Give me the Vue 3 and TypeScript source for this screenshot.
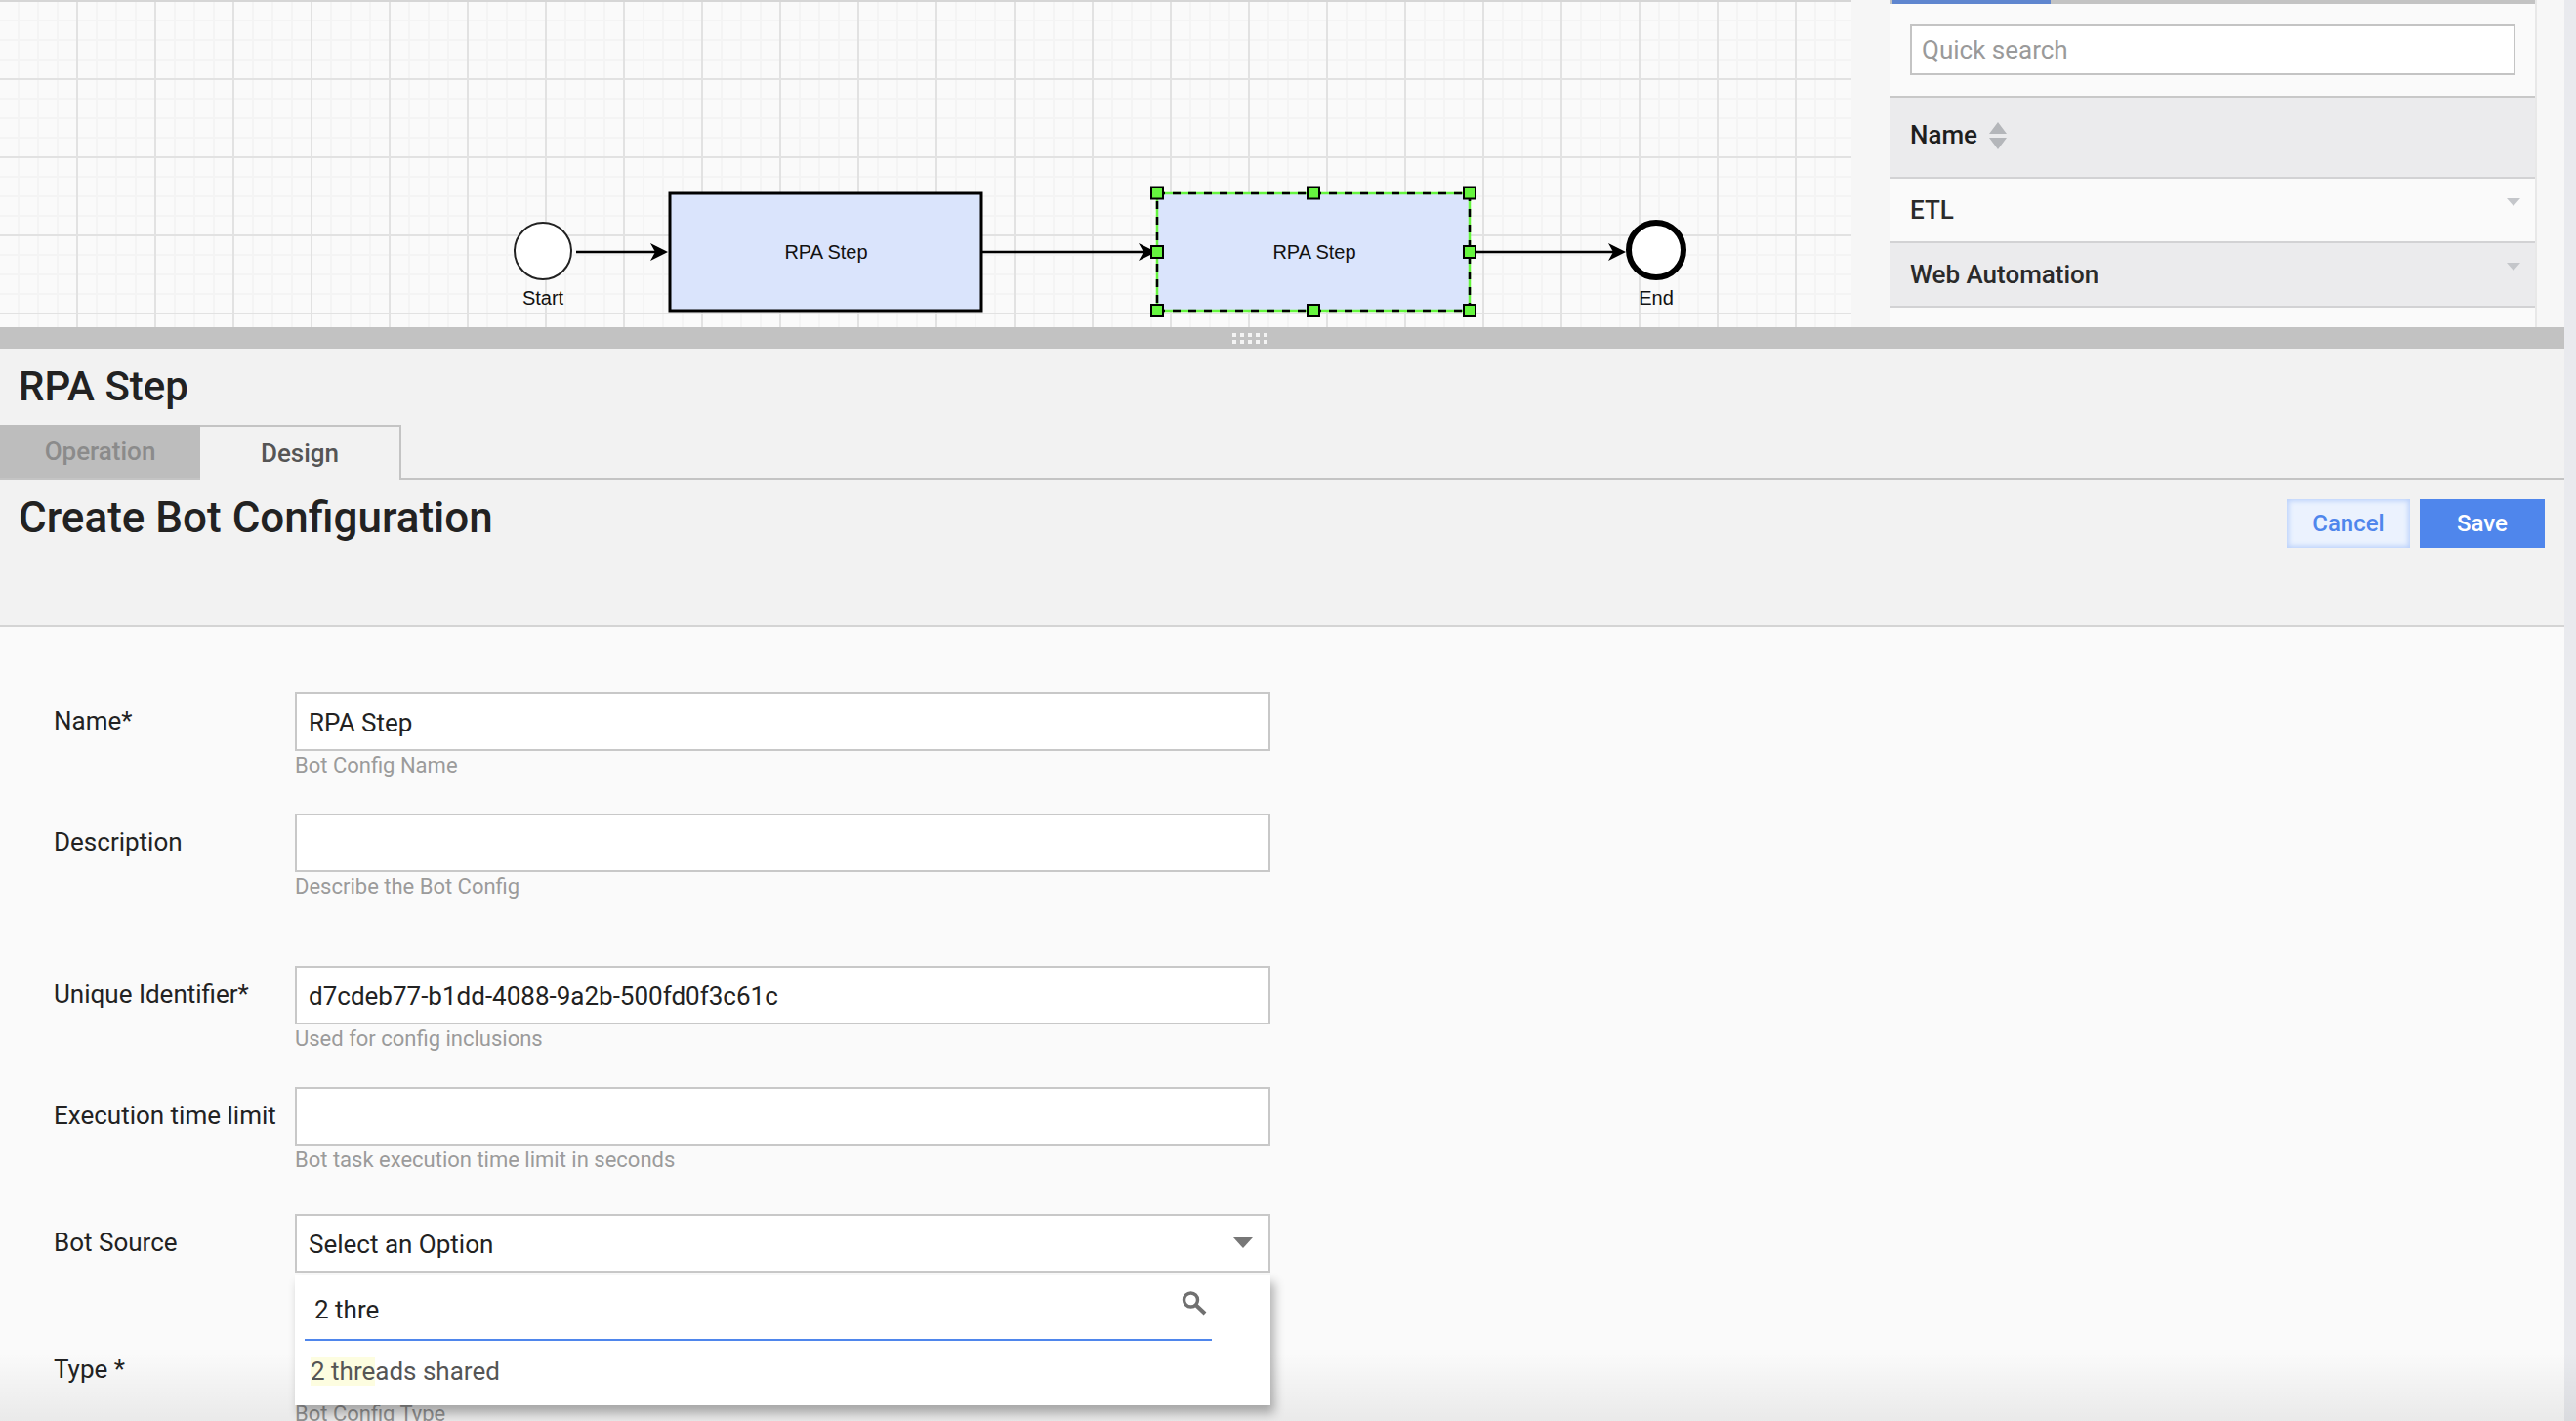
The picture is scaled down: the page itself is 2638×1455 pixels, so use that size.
<script setup lang="ts">
// Bot step editor: flow diagram on top, config form below.
interface Field {
  label: string
  value?: string
  hint: string
  extra?: boolean
  select?: boolean
}

const fields: Field[] = [
  { label: 'Name*', value: 'RPA Step', hint: 'Bot Config Name' },
  { label: 'Description', hint: 'Describe the Bot Config', extra: true },
  { label: 'Unique Identifier*', value: 'd7cdeb77-b1dd-4088-9a2b-500fd0f3c61c', hint: 'Used for config inclusions' },
  { label: 'Execution time limit', hint: 'Bot task execution time limit in seconds' },
  { label: 'Bot Source', value: 'Select an Option', hint: '', select: true },
  { label: 'Type *', value: 'Select an Option', hint: 'Bot Config Type', select: true },
]

const categories = ['ETL', 'Web Automation', '']

const handles = [
  [1185, 197.5],
  [1345, 197.5],
  [1505, 197.5],
  [1185, 258],
  [1505, 258],
  [1185, 318],
  [1345, 318],
  [1505, 318],
]

const arrows = [
  { x1: 590, x2: 684 },
  { x1: 1005, x2: 1184 },
  { x1: 1511, x2: 1665 },
]
</script>

<template>
  <div class="page">
    <div class="main">
      <section class="top">
        <div class="canvas">
          <svg class="diagram" width="1896" height="335" viewBox="0 0 1896 335">
            <g v-for="(a, i) in arrows" :key="`a${i}`">
              <line :x1="a.x1" y1="258" :x2="a.x2 - 10" y2="258" stroke="#000" stroke-width="2.5" />
              <path :d="`M${a.x2} 258 L${a.x2 - 18} 249 L${a.x2 - 13} 258 L${a.x2 - 18} 267 Z`" fill="#000" />
            </g>
            <circle cx="556" cy="257" r="29" fill="#fff" stroke="#222" stroke-width="2" />
            <text x="556" y="312" class="shape-label">Start</text>
            <rect x="686" y="198" width="319" height="120" fill="#dae4fc" stroke="#000" stroke-width="3" />
            <text x="846" y="265" class="shape-label">RPA Step</text>
            <rect x="1185" y="198" width="320" height="120" fill="#dae4fc" />
            <rect x="1185" y="198" width="320" height="120" fill="none" stroke="#66f53f" stroke-width="2.5" />
            <rect x="1185" y="198" width="320" height="120" fill="none" stroke="#000" stroke-width="2.5" stroke-dasharray="8 8" />
            <text x="1346" y="265" class="shape-label">RPA Step</text>
            <circle cx="1696" cy="256" r="28" fill="#fff" stroke="#000" stroke-width="6" />
            <text x="1696" y="312" class="shape-label">End</text>
            <rect
              v-for="(h, i) in handles"
              :key="`h${i}`"
              :x="h[0] - 6"
              :y="h[1] - 6"
              width="12"
              height="12"
              fill="#66f53f"
              stroke="#000"
              stroke-width="2"
            />
          </svg>
        </div>
        <div class="gutter"></div>
        <aside class="side">
          <div class="side-tabs"><span class="side-tab-on"></span></div>
          <div class="search-wrap">
            <div class="search">Quick search</div>
          </div>
          <div class="side-head">
            <span>Name</span>
            <svg class="sort" width="18" height="28" viewBox="0 0 18 28">
              <path d="M9 0 L18 12 H0 Z M0 16 H18 L9 28 Z" fill="#b4b6ba" />
            </svg>
          </div>
          <div v-for="(c, i) in categories" :key="i" class="side-row" :class="{ alt: i === 1 }">
            <span>{{ c }}</span>
            <i class="chev"></i>
          </div>
        </aside>
        <div class="side-rest"></div>
      </section>

      <div class="splitter">
        <div class="grip">
          <i v-for="n in 10" :key="n"></i>
        </div>
      </div>

      <section class="detail">
        <h1 class="title">RPA Step</h1>
        <div class="tabs">
          <div class="tab off">Operation</div>
          <div class="tab on">Design</div>
          <div class="tab-fill"></div>
        </div>
        <header class="form-head">
          <h2>Create Bot Configuration</h2>
          <div class="actions">
            <button class="btn cancel">Cancel</button>
            <button class="btn save">Save</button>
          </div>
        </header>
        <form class="form">
          <div v-for="f in fields" :key="f.label" class="row" :class="{ extra: f.extra, pick: f.select }">
            <label>{{ f.label }}</label>
            <div class="control">
              <div class="box">
                <span>{{ f.value }}</span>
                <i v-if="f.select" class="caret"></i>
              </div>
              <div class="hint">{{ f.hint }}</div>
              <div v-if="f.label === 'Bot Source'" class="menu">
                <div class="menu-search">
                  <span>2 thre</span>
                  <svg class="mag" width="28" height="26" viewBox="0 0 28 26">
                    <circle cx="10.5" cy="10" r="7" fill="none" stroke="#707070" stroke-width="3.4" />
                    <path d="M15.5 15 L25 24" stroke="#707070" stroke-width="4" fill="none" />
                  </svg>
                </div>
                <div class="option"><mark>2 thre</mark>ads shared</div>
              </div>
            </div>
          </div>
        </form>
      </section>
    </div>
    <div class="strip"></div>
    <div class="fade"></div>
  </div>
</template>

<style>
html,
body {
  margin: 0;
  padding: 0;
  background: #fafafa;
}
</style>

<style scoped>
.page {
  position: relative;
  display: flex;
  width: 2638px;
  height: 1455px;
  overflow: hidden;
  font-family: Roboto, "Liberation Sans", sans-serif;
  color: #222;
}
.main {
  width: 2626px;
  display: flex;
  flex-direction: column;
}
.strip {
  width: 12px;
  background: #e9eaee;
}
.fade {
  position: absolute;
  left: 0;
  right: 0;
  bottom: 0;
  height: 70px;
  background: linear-gradient(to bottom, rgba(0, 0, 0, 0), rgba(0, 0, 0, 0.065));
  pointer-events: none;
}

/* top area */
.top {
  display: flex;
  height: 335px;
  overflow: hidden;
  background: #f7f7f7;
}
.canvas {
  position: relative;
  width: 1896px;
  height: 335px;
  flex: none;
  border-top: 2px solid #d6d6d6;
  box-sizing: border-box;
  background-color: #fafafa;
  background-image:
    linear-gradient(to right, #e2e2e2 2px, transparent 2px),
    linear-gradient(to bottom, #e2e2e2 2px, transparent 2px),
    linear-gradient(to right, #f4f4f4 2px, transparent 2px),
    linear-gradient(to bottom, #f4f4f4 2px, transparent 2px);
  background-size: 80px 80px, 80px 80px, 20px 20px, 20px 20px;
  background-position: -2px -2px, 0 -2px, -2px 0, 0 -2px;
}
.diagram {
  position: absolute;
  left: 0;
  top: -2px;
}
.shape-label {
  font-family: "Liberation Sans", Arial, sans-serif;
  font-size: 20px;
  text-anchor: middle;
  fill: #111;
}
.gutter {
  width: 40px;
  flex: none;
  background: #f6f6f6;
}
.side {
  width: 660px;
  flex: none;
  background: #fafafa;
  border-right: 2px solid #e8e8e8;
  box-sizing: content-box;
}
.side-rest {
  flex: 1;
  background: #f7f7f7;
}
.side-tabs {
  height: 4px;
  background: #c3c3c3;
}
.side-tab-on {
  display: block;
  width: 162px;
  height: 4px;
  margin-left: 2px;
  background: #5f86cf;
}
.search-wrap {
  padding: 21px 20px 21px;
  border-bottom: 2px solid #c8c8c8;
}
.search {
  height: 52px;
  box-sizing: border-box;
  border: 2px solid #c4c4c4;
  background: #fff;
  padding-left: 10px;
  font-size: 26px;
  line-height: 48px;
  color: #9a9a9a;
}
.side-head {
  height: 81px;
  display: flex;
  align-items: center;
  gap: 12px;
  padding: 0 20px;
  background: #ebebed;
  border-bottom: 2px solid #d2d2d4;
  font-size: 26px;
  font-weight: 500;
  color: #1e1e1e;
}
.side-head span {
  margin-top: -6px;
}
.sort {
  margin-top: -4px;
}
.side-row {
  position: relative;
  height: 64px;
  padding: 0 20px;
  display: flex;
  align-items: center;
  border-bottom: 2px solid #d2d2d4;
  font-size: 26px;
  font-weight: 500;
  color: #2a2a2a;
  background: #fafafa;
}
.side-row.alt {
  background: #ebebed;
}
.chev {
  position: absolute;
  right: 15px;
  top: 20px;
  width: 0;
  height: 0;
  border-left: 7.5px solid transparent;
  border-right: 7.5px solid transparent;
  border-top: 8px solid #c4c6ca;
}

/* splitter */
.splitter {
  height: 22px;
  flex: none;
  background: #c2c2c2;
  display: flex;
  justify-content: center;
  align-items: center;
}
.grip {
  display: grid;
  grid-template-columns: repeat(5, 4px);
  grid-auto-rows: 4px;
  gap: 3px 4px;
  margin-left: -66px;
}
.grip i {
  background: #f4f4f4;
}

/* detail */
.detail {
  flex: 1;
  min-height: 0;
  background: #f2f2f2;
}
.title {
  margin: 0;
  height: 78px;
  padding-left: 19px;
  font-size: 42px;
  font-weight: 500;
  line-height: 78px;
  color: #222;
}
.tabs {
  display: flex;
  height: 56px;
}
.tab {
  box-sizing: border-box;
  display: flex;
  align-items: center;
  justify-content: center;
  font-size: 26px;
  font-weight: 500;
  height: 56px;
}
.tab.off {
  width: 205px;
  background: #bdbdbd;
  color: #8b8b8b;
  border-bottom: 2px solid #c4c4c4;
}
.tab.on {
  width: 206px;
  border: 2px solid #c4c4c4;
  border-left: 0;
  border-bottom: 0;
  color: #555;
}
.tab-fill {
  flex: 1;
  border-bottom: 2px solid #c4c4c4;
}
.form-head {
  display: flex;
  justify-content: space-between;
  align-items: flex-start;
  height: 151px;
  box-sizing: border-box;
  padding: 20px 20px 0 19px;
  border-bottom: 2px solid #d4d4d4;
}
.form-head h2 {
  margin: 0;
  font-size: 44px;
  font-weight: 500;
  line-height: 38px;
  color: #222;
}
.actions {
  display: flex;
  gap: 10px;
}
.btn {
  height: 50px;
  border: 0;
  padding: 0;
  font-family: inherit;
  font-size: 24px;
  font-weight: 500;
}
.cancel {
  width: 126px;
  background: #ebf2fe;
  color: #4f86ec;
  box-shadow: inset 0 0 5px 2px #bcd2fb;
}
.save {
  width: 128px;
  background: #4f86ec;
  color: #fff;
}
.form {
  background: #fafafa;
  padding: 67px 0 0 55px;
  height: 900px;
}
.row {
  display: grid;
  grid-template-columns: 247px 999px;
  height: 124px;
}
.row.extra {
  height: 156px;
}
.row.pick {
  height: 130px;
}
.row:nth-child(4) {
  height: 130px;
}
.row label {
  font-size: 26px;
  line-height: 58px;
  color: #222;
}
.control {
  position: relative;
}
.box {
  position: relative;
  box-sizing: border-box;
  height: 60px;
  border: 2px solid #c8c8c8;
  background: #fff;
  padding-left: 12px;
  font-size: 26px;
  line-height: 58px;
  color: #222;
}
.caret {
  position: absolute;
  right: 16px;
  top: 22px;
  width: 0;
  height: 0;
  border-left: 10px solid transparent;
  border-right: 10px solid transparent;
  border-top: 11px solid #777;
}
.hint {
  font-size: 22px;
  line-height: 30px;
  color: #9b9b9b;
}
.menu {
  position: absolute;
  z-index: 2;
  left: 0;
  right: 0;
  top: 62px;
  height: 134px;
  background: #fff;
  box-shadow: 4px 8px 10px rgba(0, 0, 0, 0.3);
}
.menu-search {
  position: relative;
  box-sizing: border-box;
  margin: 0 60px 0 10px;
  height: 68px;
  padding-left: 10px;
  border-bottom: 2px solid #4f86ec;
  font-size: 26px;
  line-height: 72px;
  color: #222;
}
.mag {
  position: absolute;
  right: 4px;
  top: 16px;
}
.option {
  padding: 16px 0 0 16px;
  font-size: 26px;
  line-height: 30px;
  color: #555;
}
.option mark {
  background: #fdfde0;
  color: inherit;
}
</style>
